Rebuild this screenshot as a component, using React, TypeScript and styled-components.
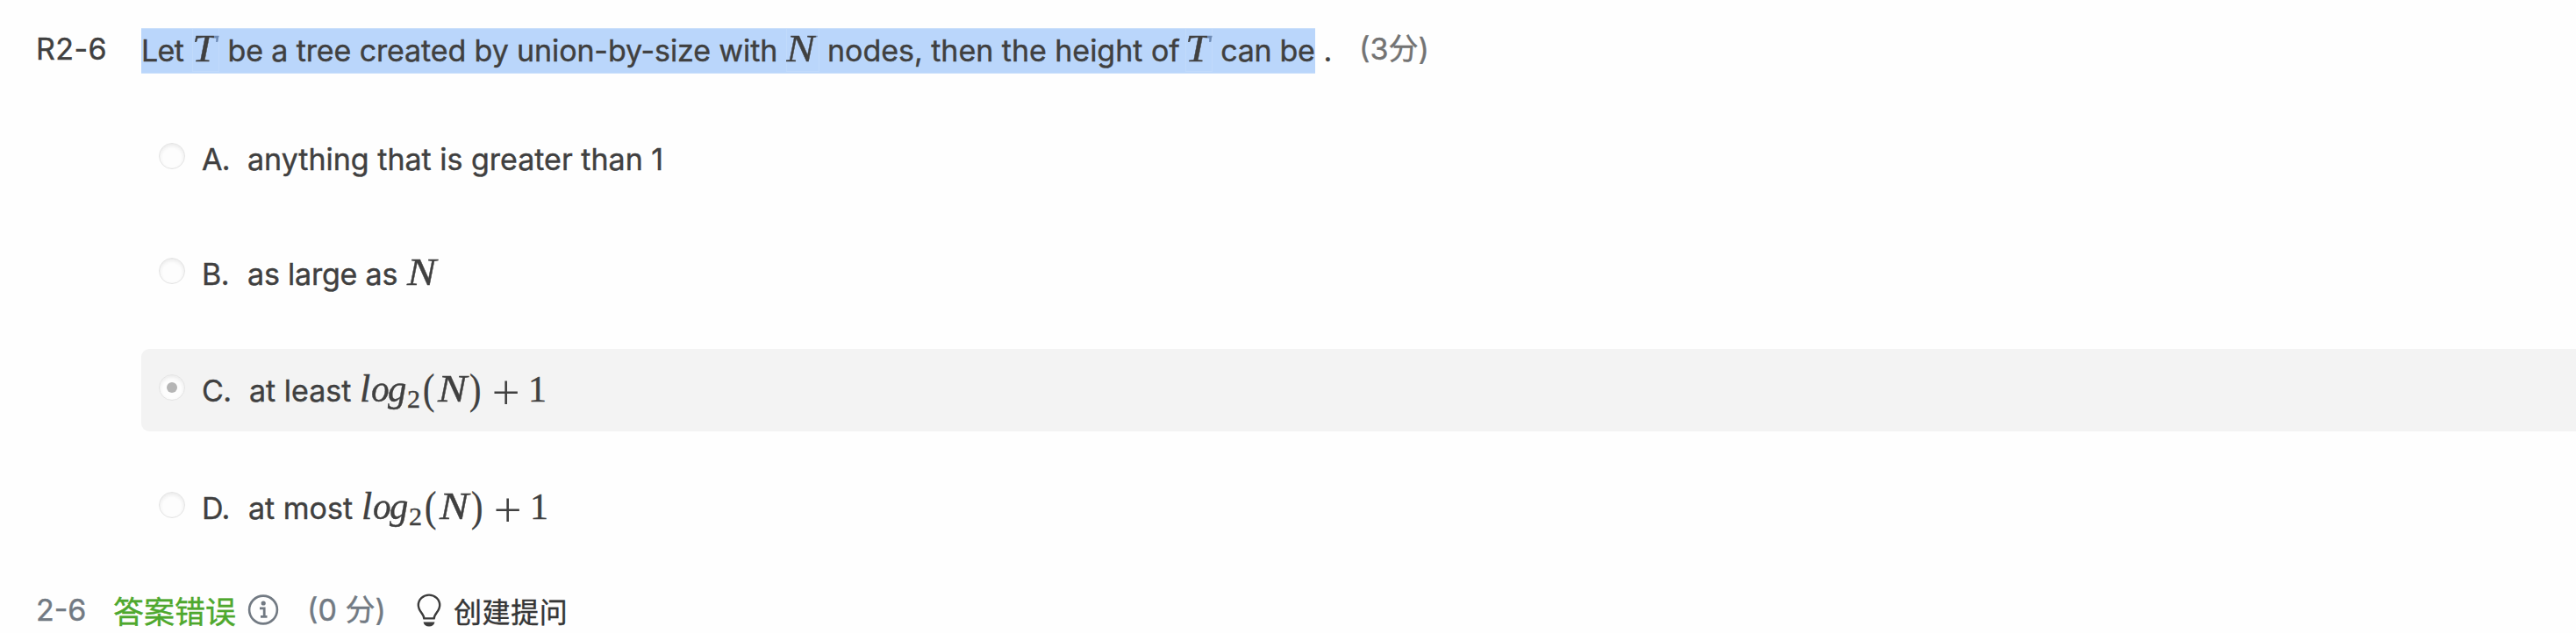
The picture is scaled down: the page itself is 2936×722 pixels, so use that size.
import React from "react";
import styled, { createGlobalStyle, css } from "styled-components";

const INK = "#404040";
const MUTED = "#727a83";

const GlobalStyle = createGlobalStyle`
  body {
    margin: 0;
    background: #fefefe;
    color: ${INK};
    font-family: Inter, "Noto Sans CJK SC", sans-serif;
    font-size: 34px;
    font-weight: 400;
    -webkit-text-stroke: 0.4px currentColor;
  }
`;

const Page = styled.main`
  box-sizing: border-box;
  height: 722px;
  overflow: hidden;
  padding: 32px 0 0 41px;
  white-space: pre;
`;

const Problem = styled.section`
  display: grid;
  grid-template-columns: 120px 1fr;
`;

const ProblemLabel = styled.div`
  line-height: 48px;
  letter-spacing: 0.4px;
`;

const Statement = styled.div`
  display: flex;
  align-items: flex-start;
  height: 52px;
  line-height: 52px;
`;

const Highlight = styled.span`
  display: flex;
  align-items: baseline;
  width: 1338px;
  box-sizing: border-box;
  height: 52px;
  background: #bad6fb;
  box-shadow: inset 0 1px #cbe0fb, inset 0 -1px #cbe0fb;
`;

const Words = styled.span<{ $width: number; $track?: number }>`
  flex: none;
  width: ${(p) => p.$width}px;
  letter-spacing: ${(p) => p.$track ?? 0}px;
`;

const Points = styled.span`
  color: #737373;
  line-height: 48px;
  letter-spacing: 0;
`;

const Formula = styled.span<{ $selected?: boolean }>`
  flex: none;
  display: inline-block;
  ${(p) =>
    p.$selected &&
    css`
      position: relative;
      &::before {
        content: "";
        position: absolute;
        inset: 1px 0 2px 0;
        border: 1px solid #c1dafb;
        border-top: 0;
      }
    `}
`;

const Cell = styled.span<{ $width: number }>`
  display: inline-block;
  width: ${(p) => p.$width}px;
`;

const Glyph = styled.span<{
  $size?: number;
  $stretch?: number;
  $upright?: boolean;
  $drop?: number;
  $fadeAt?: number;
}>`
  display: inline-block;
  font-family: "Liberation Serif", serif;
  font-style: ${(p) => (p.$upright ? "normal" : "italic")};
  font-size: ${(p) => p.$size ?? 44}px;
  line-height: 40px;
  transform: translateY(${(p) => p.$drop ?? 0}px) scaleX(${(p) => p.$stretch ?? 1});
  transform-origin: 0 50%;
  ${(p) =>
    p.$fadeAt &&
    css`
      padding-right: 8px;
      background: linear-gradient(to right, ${INK} ${p.$fadeAt}px, #6e8bb5 ${p.$fadeAt}px);
      background-clip: text;
      color: transparent;
      -webkit-text-stroke: 0.4px transparent;
    `}
`;

const Plus = styled(Glyph)`
  font-family: Inter, sans-serif;
  font-weight: 200;
  line-height: 16px;
  -webkit-text-stroke: 0;
`;

const Options = styled.div`
  grid-column: 2;
  display: grid;
  grid-template-rows: 91px 93px 93.5px 93.5px;
  row-gap: 40px;
  margin-top: 50px;
`;

const Option = styled.label<{ $chosen?: boolean }>`
  display: flex;
  align-items: flex-start;
  padding: 24px 0 0 20px;
  line-height: 48px;
  border-radius: 9px 0 0 9px;
  background: ${(p) => (p.$chosen ? "#f3f3f3" : "transparent")};
`;

const Radio = styled.span`
  display: grid;
  place-items: center;
  box-sizing: border-box;
  width: 30px;
  height: 30px;
  margin: 5px 19px 0 0;
  border: 1px solid #e4e4e4;
  border-radius: 50%;
  background: #fdfdfd;
  box-shadow: inset 0 2px 4px #e9e9e9;
`;

const Dot = styled.span`
  width: 12px;
  height: 12px;
  border-radius: 50%;
  background: #b5b5b5;
`;

const Letter = styled.span<{ $width?: number }>`
  width: ${(p) => p.$width ?? 52}px;
  letter-spacing: -0.6px;
`;

const Answer = styled.span`
  display: flex;
  align-items: baseline;
`;

const Footer = styled.footer`
  display: flex;
  align-items: flex-start;
  margin-top: 46.5px;
  line-height: 48px;
  color: ${MUTED};
`;

const Verdict = styled.span`
  width: 153px;
  font-family: "Noto Sans CJK SC", sans-serif;
  font-size: 35px;
  color: #4ea82d;
`;

const Icon = styled.svg<{ $gap: number }>`
  flex: none;
  width: 36px;
  height: 40px;
  margin: 4px ${(p) => p.$gap}px 0 0;
`;

const AskLink = styled.span`
  font-family: "Noto Sans CJK SC", sans-serif;
  font-size: 32px;
  letter-spacing: 0.6px;
  color: #363636;
`;

function Variable({ name, width, fadeAt }: { name: string; width: number; fadeAt?: number }) {
  return (
    <Formula $selected={!!fadeAt}>
      <Cell $width={width}>
        <Glyph $stretch={name === "T" ? 1.12 : 1.13} $fadeAt={fadeAt}>
          {name}
        </Glyph>
      </Cell>
    </Formula>
  );
}

function LogFormula() {
  return (
    <Formula>
      <Cell $width={13}><Glyph>l</Glyph></Cell>
      <Cell $width={19}><Glyph $stretch={0.94}>o</Glyph></Cell>
      <Cell $width={22}><Glyph $stretch={0.97}>g</Glyph></Cell>
      <Cell $width={18}><Glyph $upright $size={30} $drop={7}>2</Glyph></Cell>
      <Cell $width={17}><Glyph $upright $size={49} $drop={2} $stretch={0.82}>(</Glyph></Cell>
      <Cell $width={36}><Glyph $stretch={1.13}>N</Glyph></Cell>
      <Cell $width={22}><Glyph $upright $size={49} $drop={2} $stretch={0.82}>)</Glyph></Cell>
      <Cell $width={45}><Plus $upright $size={61} $drop={7}>+</Plus></Cell>
      <Cell $width={20}><Glyph $upright $size={42}>1</Glyph></Cell>
    </Formula>
  );
}

function InfoIcon() {
  return (
    <Icon viewBox="0 0 36 40" $gap={32}>
      <circle cx="18" cy="19.5" r="15.9" fill="none" stroke={MUTED} strokeWidth="2.6" />
      <circle cx="18.2" cy="12" r="2.6" fill={MUTED} />
      <path d="M14 17.8h5.2v8.2q0 1.3 1.3 1.3h2M15 27.3h5" fill="none" stroke={MUTED} strokeWidth="2.8" />
    </Icon>
  );
}

function BulbIcon() {
  return (
    <Icon viewBox="0 0 36 40" $gap={10}>
      <path
        d="M12.3 29.4C12.3 24 5.8 21.5 5.8 14.2C5.8 7.5 11.6 2.6 18 2.6S30.2 7.5 30.2 14.2C30.2 21.5 23.7 24 23.7 29.4Z"
        fill="none"
        stroke="#3c3c3c"
        strokeWidth="2.4"
        strokeLinejoin="round"
      />
      <path d="M11.5 33.5h13q-1.2 5-6.5 5t-6.5-5Z" fill="#3c3c3c" />
    </Icon>
  );
}

export default function App() {
  return (
    <Page>
      <GlobalStyle />
      <Problem>
        <ProblemLabel>R2-6</ProblemLabel>
        <Statement>
          <Highlight>
            <Words $width={58} $track={-0.6}>Let</Words>
            <Variable name="T" width={31} fadeAt={22} />
            <Words $width={645.5} $track={-0.12}> be a tree created by union-by-size with</Words>
            <Variable name="N" width={38} fadeAt={30} />
            <Words $width={417.5} $track={-0.03}> nodes, then the height of</Words>
            <Variable name="T" width={31} fadeAt={22} />
            <Words $width={114} $track={-0.3}> can be</Words>
          </Highlight>
          <Words $width={50}> .</Words>
          <Points>(3分)</Points>
        </Statement>
        <Options>
          <Option>
            <Radio />
            <Letter>A.</Letter>
            <Words $width={480}>anything that is greater than 1</Words>
          </Option>
          <Option>
            <Radio />
            <Letter>B.</Letter>
            <Answer>
              <Words $width={182} $track={-0.2}>as large as</Words>
              <Variable name="N" width={38} />
            </Answer>
          </Option>
          <Option $chosen>
            <Radio>
              <Dot />
            </Radio>
            <Letter $width={54}>C.</Letter>
            <Answer>
              <Words $width={126}>at least</Words>
              <LogFormula />
            </Answer>
          </Option>
          <Option>
            <Radio />
            <Letter $width={53}>D.</Letter>
            <Answer>
              <Words $width={129}>at most</Words>
              <LogFormula />
            </Answer>
          </Option>
        </Options>
      </Problem>
      <Footer>
        <Words $width={88}>2-6</Words>
        <Verdict>答案错误</Verdict>
        <InfoIcon />
        <Words $width={121}>(0 分)</Words>
        <BulbIcon />
        <AskLink>创建提问</AskLink>
      </Footer>
    </Page>
  );
}
